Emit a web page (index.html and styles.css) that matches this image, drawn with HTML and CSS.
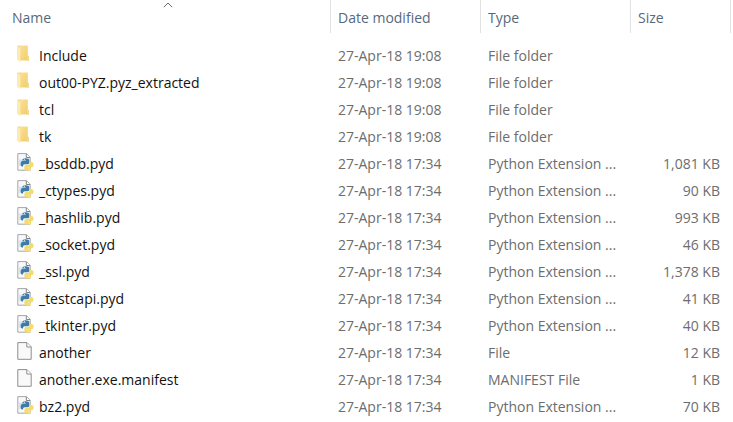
FILE: index.html
```html
<!DOCTYPE html>
<html lang="en">
<head>
<meta charset="utf-8">
<title>File list</title>
<link rel="stylesheet" href="styles.css">
</head>
<body>
<svg class="sprite" aria-hidden="true">
  <defs>
    <linearGradient id="fold" x1="0" y1="0" x2="1" y2="1">
      <stop offset="0" stop-color="#fae196"/>
      <stop offset="1" stop-color="#f1cb68"/>
    </linearGradient>
    <symbol id="folder" viewBox="0 0 17 18">
      <path d="M0.3 0.6H4V15H0.3z" fill="#f3d78c"/>
      <path d="M3 0.6H10.8V10.6L12 11.8V15.4H3z" fill="url(#fold)"/>
      <path d="M10.2 11.6L11 10.8L12 11.8V15.4H10.2z" fill="#f5d98a"/>
      <path d="M0.2 0.8L3.4 3V17.2L0.2 15z" fill="#fcebb4"/>
    </symbol>
    <symbol id="file" viewBox="0 0 17 18">
      <path d="M0.8 0.6H10L14.2 4.8V17.3H0.8z" fill="#f9f9f9" stroke="#8e8e8e"/>
      <path d="M9.8 0.8V5H14" fill="#fff" stroke="#8e8e8e"/>
    </symbol>
    <symbol id="python" viewBox="0 0 17 18">
      <path d="M0.8 0.6H9.5L13.2 4.3V17.2H0.8z" fill="#f7f8fa" stroke="#a4a7aa"/>
      <path d="M9.3 0.8V4.5H13" fill="#fff" stroke="#7f8285"/>
      <path d="M2 6.5H6V13H2z" fill="#d3e4f2"/>
      <path d="M5.4 7.4V6.9Q5.4 5.2 8.6 5.2Q12.2 5.2 12.2 7.1V9.7Q12.2 11.3 10.5 11.3H7.6Q6 11.3 6 12.9V13.6H5.2Q3.6 13.6 3.6 10.8Q3.6 8.1 5.4 8.1H8.8V7.4z" fill="#3f7ba5"/>
      <path d="M13 8.9H14.3Q16.6 8.9 16.6 11.7Q16.6 14.3 14.3 14.3H10.8V14.8H14V15.8Q14 17.7 10.8 17.7Q7.4 17.7 7.4 15.8V13.6Q7.4 12.1 9 12.1H11.4Q13 12.1 13 10.5z" fill="#f4db6c"/>
      <circle cx="7.4" cy="6.5" r="0.5" fill="#fff"/>
      <circle cx="12.2" cy="16.2" r="0.5" fill="#fff"/>
    </symbol>
  </defs>
</svg>
<table class="files">
  <colgroup><col><col class="col-date"><col class="col-type"><col class="col-size"></colgroup>
  <thead>
    <tr>
      <th scope="col" aria-sort="ascending">Name<svg class="sort" viewBox="0 0 10 6" aria-hidden="true"><path d="M0.8 5.2L5 1L9.2 5.2"/></svg></th>
      <th scope="col">Date modified</th>
      <th scope="col">Type</th>
      <th scope="col">Size</th>
    </tr>
  </thead>
  <tbody>
    <tr><td><span class="name"><svg class="icon"><use href="#folder"/></svg>Include</span></td><td>27-Apr-18 19:08</td><td>File folder</td><td></td></tr>
    <tr><td><span class="name"><svg class="icon"><use href="#folder"/></svg>out00-PYZ.pyz_extracted</span></td><td>27-Apr-18 19:08</td><td>File folder</td><td></td></tr>
    <tr><td><span class="name"><svg class="icon"><use href="#folder"/></svg>tcl</span></td><td>27-Apr-18 19:08</td><td>File folder</td><td></td></tr>
    <tr><td><span class="name"><svg class="icon"><use href="#folder"/></svg>tk</span></td><td>27-Apr-18 19:08</td><td>File folder</td><td></td></tr>
    <tr><td><span class="name"><svg class="icon"><use href="#python"/></svg>_bsddb.pyd</span></td><td>27-Apr-18 17:34</td><td>Python Extension ...</td><td>1,081 KB</td></tr>
    <tr><td><span class="name"><svg class="icon"><use href="#python"/></svg>_ctypes.pyd</span></td><td>27-Apr-18 17:34</td><td>Python Extension ...</td><td>90 KB</td></tr>
    <tr><td><span class="name"><svg class="icon"><use href="#python"/></svg>_hashlib.pyd</span></td><td>27-Apr-18 17:34</td><td>Python Extension ...</td><td>993 KB</td></tr>
    <tr><td><span class="name"><svg class="icon"><use href="#python"/></svg>_socket.pyd</span></td><td>27-Apr-18 17:34</td><td>Python Extension ...</td><td>46 KB</td></tr>
    <tr><td><span class="name"><svg class="icon"><use href="#python"/></svg>_ssl.pyd</span></td><td>27-Apr-18 17:34</td><td>Python Extension ...</td><td>1,378 KB</td></tr>
    <tr><td><span class="name"><svg class="icon"><use href="#python"/></svg>_testcapi.pyd</span></td><td>27-Apr-18 17:34</td><td>Python Extension ...</td><td>41 KB</td></tr>
    <tr><td><span class="name"><svg class="icon"><use href="#python"/></svg>_tkinter.pyd</span></td><td>27-Apr-18 17:34</td><td>Python Extension ...</td><td>40 KB</td></tr>
    <tr><td><span class="name"><svg class="icon"><use href="#file"/></svg>another</span></td><td>27-Apr-18 17:34</td><td>File</td><td>12 KB</td></tr>
    <tr><td><span class="name"><svg class="icon"><use href="#file"/></svg>another.exe.manifest</span></td><td>27-Apr-18 17:34</td><td>MANIFEST File</td><td>1 KB</td></tr>
    <tr><td><span class="name"><svg class="icon"><use href="#python"/></svg>bz2.pyd</span></td><td>27-Apr-18 17:34</td><td>Python Extension ...</td><td>70 KB</td></tr>
  </tbody>
</table>
</body>
</html>
```
FILE: styles.css
```css
body {
  margin: 0;
  padding: 0 2px 0 5px;
  background: #fff;
  color: #6d6d6d;
  font-family: "Segoe UI", "Open Sans", "Noto Sans", sans-serif;
  font-size: 14px;
  line-height: 27px;
}

.sprite {
  position: absolute;
  width: 0;
  height: 0;
}

.files {
  width: 100%;
  table-layout: fixed;
  border-collapse: separate;
  border-spacing: 0;
}

.col-date,
.col-type {
  width: 150px;
}

.col-size {
  width: 100px;
}

th {
  position: relative;
  height: 33px;
  padding: 2px 7px 0;
  box-sizing: border-box;
  border-right: 1px solid #e2e2e2;
  color: #56697c;
  font-weight: 400;
  text-align: left;
}

.sort {
  position: absolute;
  top: 2px;
  left: 50%;
  width: 10px;
  height: 6px;
  margin-left: -5px;
  fill: none;
  stroke: #666;
}

/* gap between the header and the first row */
tbody::before {
  content: "";
  display: block;
  height: 9px;
}

td {
  height: 27px;
  padding: 0 7px;
  white-space: nowrap;
}

td:first-child {
  padding-left: 12px;
  color: #111;
}

td:last-child {
  padding-right: 11px;
  text-align: right;
}

.name {
  display: flex;
  align-items: center;
  gap: 5px;
}

.icon {
  flex: none;
  width: 17px;
  height: 18px;
  margin-bottom: 3px;
}
```
